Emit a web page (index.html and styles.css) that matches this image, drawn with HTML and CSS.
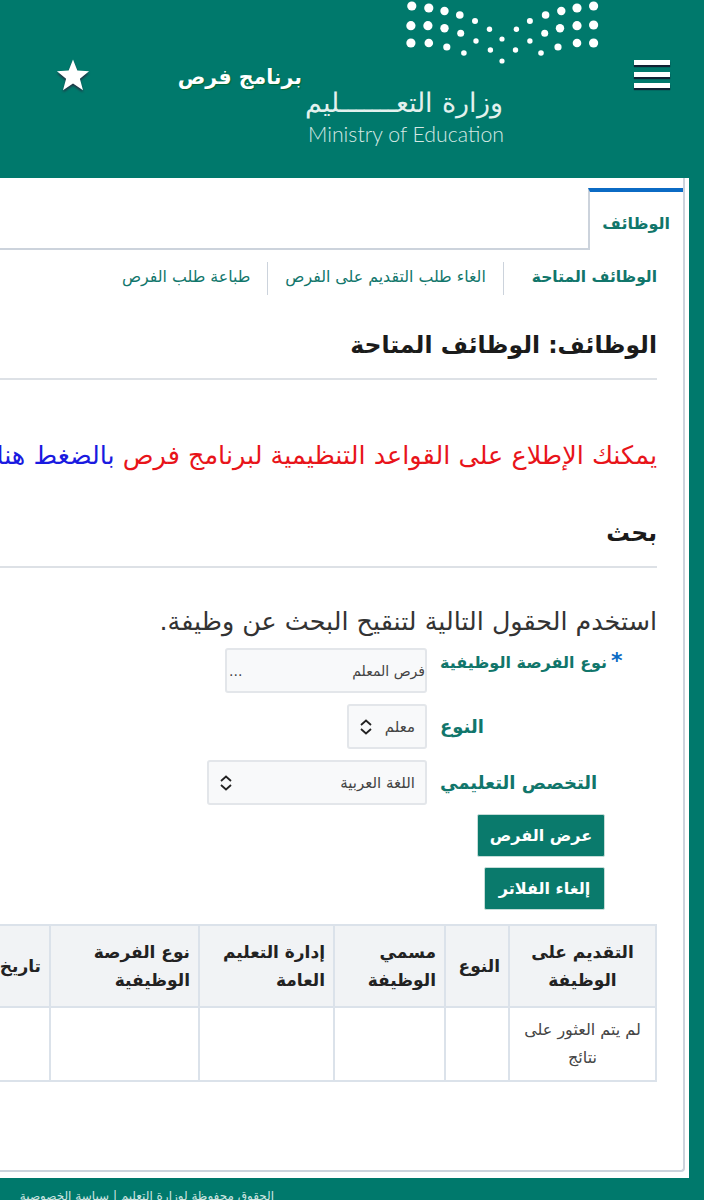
FILE: index.html
```html
<!DOCTYPE html>
<html lang="ar" dir="rtl">
<head>
<meta charset="utf-8">
<title>برنامج فرص</title>
<link rel="stylesheet" href="styles.css">
</head>
<body>
<header class="top">
  <button class="burger" aria-label="menu"><span></span><span></span><span></span></button>
  <div class="logo">
    <svg class="dots" width="195" height="66" viewBox="0 0 195 66" fill="#fff">
      <circle cx="6.8" cy="6" r="4.6"/><circle cx="23.8" cy="8" r="4.6"/><circle cx="39.5" cy="11" r="4.2"/><circle cx="54.8" cy="15" r="3.8"/><circle cx="70" cy="21" r="3"/>
      <circle cx="124.9" cy="21" r="3"/><circle cx="140.6" cy="15" r="3.8"/><circle cx="156.3" cy="11" r="4.2"/><circle cx="172" cy="8" r="4.6"/><circle cx="188.6" cy="6" r="4.6"/>
      <circle cx="5.9" cy="25.7" r="4.6"/><circle cx="22.9" cy="25.7" r="4.6"/><circle cx="39.5" cy="28.3" r="4.2"/><circle cx="55.7" cy="33.3" r="3.5"/><circle cx="84.5" cy="29.3" r="2.7"/>
      <circle cx="111.4" cy="29.3" r="2.7"/><circle cx="139.7" cy="33.3" r="3.5"/><circle cx="155" cy="28.3" r="4.2"/><circle cx="172" cy="25.7" r="4.6"/><circle cx="188.6" cy="25" r="4.6"/>
      <circle cx="5.9" cy="43" r="4.6"/><circle cx="23.8" cy="43" r="4.3"/><circle cx="41.8" cy="47" r="3.6"/><circle cx="58.9" cy="53" r="2.8"/><circle cx="71" cy="41" r="2.7"/><circle cx="85.4" cy="50" r="2.7"/><circle cx="97" cy="39" r="2.6"/><circle cx="97" cy="61" r="2.6"/>
      <circle cx="110.5" cy="50" r="2.7"/><circle cx="124.9" cy="41" r="2.7"/><circle cx="136" cy="53" r="2.8"/><circle cx="153" cy="47" r="3.6"/><circle cx="172" cy="43" r="4.3"/><circle cx="188.6" cy="43" r="4.6"/>
    </svg>
    <div class="logo-ar">وزارة التعـــــــليم</div>
    <div class="logo-en" dir="ltr">Ministry of Education</div>
  </div>
  <div class="prog">برنامج فرص</div>
  <svg class="star" width="34" height="35" viewBox="0 0 36 36"><path d="M18 1l4.600 11.800 12.400.7-9.700 7.900 3.300 12.300L18 26.600 7.400 33.700l3.300-12.300L1 13.500l12.400-.7z" fill="#fff"/></svg>
</header>

<main class="card">
  <div class="panel">
    <div class="tabs"><div class="tab">الوظائف</div></div>
    <nav class="subnav">
      <a class="sub active">الوظائف المتاحة</a>
      <a class="sub">الغاء طلب التقديم على الفرص</a>
      <a class="sub">طباعة طلب الفرص</a>
    </nav>
    <section class="content">
      <h2 class="title">الوظائف: الوظائف المتاحة</h2>
      <p class="notice">يمكنك الإطلاع على القواعد التنظيمية لبرنامج فرص <span class="blue">بالضغط هنا</span></p>
      <h2 class="title second">بحث</h2>
      <p class="hint">استخدم الحقول التالية لتنقيح البحث عن وظيفة.</p>

      <div class="field f1">
        <label class="lbl"><span class="req">*</span>نوع الفرصة الوظيفية</label>
        <div class="control w202"><span>فرص المعلم</span><span class="more">...</span></div>
      </div>
      <div class="field f2">
        <label class="lbl">النوع</label>
        <div class="control w80 sel"><span>معلم</span>
          <svg class="updown" width="14" height="16" viewBox="0 0 14 16"><path d="M2 6l5-4.500 5 4.500M2 10l5 4.500 5-4.500" fill="none" stroke="#222" stroke-width="1.800"/></svg>
        </div>
      </div>
      <div class="field f3">
        <label class="lbl">التخصص التعليمي</label>
        <div class="control w220 sel"><span>اللغة العربية</span>
          <svg class="updown" width="14" height="16" viewBox="0 0 14 16"><path d="M2 6l5-4.500 5 4.500M2 10l5 4.500 5-4.500" fill="none" stroke="#222" stroke-width="1.800"/></svg>
        </div>
      </div>
      <div class="actions">
        <button class="btn b1">عرض الفرص</button>
        <button class="btn b2">إلغاء الفلاتر</button>
      </div>

      <table class="grid">
        <colgroup>
          <col class="c1"><col class="c2"><col class="c3"><col class="c4"><col class="c5"><col class="c6">
        </colgroup>
        <thead>
          <tr>
            <th>التقديم على الوظيفة</th>
            <th>النوع</th>
            <th>مسمي الوظيفة</th>
            <th>إدارة التعليم العامة</th>
            <th>نوع الفرصة الوظيفية</th>
            <th>تاريخ الاعلان</th>
          </tr>
        </thead>
        <tbody>
          <tr>
            <td class="empty">لم يتم العثور على نتائج</td>
            <td></td><td></td><td></td><td></td><td></td>
          </tr>
        </tbody>
      </table>
    </section>
  </div>
</main>
<footer class="foot">الحقوق محفوظة لوزارة التعليم | سياسة الخصوصية</footer>
</body>
</html>
```

FILE: styles.css
```css
html, body { margin: 0; padding: 0; overflow-x: hidden; }
body {
  background: #00796c;
  font-family: "DejaVu Sans", "Noto Sans", sans-serif;
  color: #333;
  width: 704px;
  height: 1200px;
  overflow: hidden;
}
.top {
  height: 178px;
  display: flex;
  align-items: flex-start;
  color: #fff;
}
.burger {
  width: 36px;
  height: 28px;
  margin: 60px 34px 0 0;
  padding: 0;
  border: 0;
  background: none;
  display: flex;
  flex-direction: column;
  justify-content: space-between;
}
.burger span {
  display: block;
  width: 36px;
  height: 5px;
  background: #fff;
  box-shadow: 0 2px 1px #123;
}
.logo {
  width: 292px;
  margin-right: 34px;
  display: flex;
  flex-direction: column;
  align-items: flex-start;
}
.dots { display: block; }
.logo-ar {
  align-self: flex-end;
  width: 195px;
  margin-top: 19px;
  font-size: 27px;
  line-height: 36px;
  font-weight: 200;
  white-space: nowrap;
  color: #e3f1ee;
  text-align: right;
}
.logo-en {
  align-self: flex-end;
  width: 195px;
  margin-top: 1px;
  font-family: "Lato", sans-serif;
  font-size: 21.3px;
  line-height: 24px;
  font-weight: 300;
  color: #d5e8e4;
  white-space: nowrap;
  text-align: left;
}
.prog {
  margin: 64px 6px 0 0;
  width: 124px;
  font-size: 20.5px;
  line-height: 26px;
  font-weight: 700;
  white-space: nowrap;
  text-shadow: 1px 1px 1px #063;
}
.star {
  margin: 58px 88px 0 0;
  filter: drop-shadow(0 2px 1px #234);
}
.card {
  width: 1200px;
  height: 1000px;
  margin-right: 15px;
  box-sizing: border-box;
  background: #fff;
  padding: 0 4px 6px 0;
}
.panel {
  height: 994px;
  box-sizing: border-box;
  border-right: 2px solid #ccd3dc;
  border-bottom: 2px solid #ccd3dc;
  border-bottom-right-radius: 4px;
  padding-top: 10px;
}
.tabs {
  border-bottom: 2px solid #ccd3dc;
  height: 60px;
}
.tab {
  width: 95px;
  height: 62px;
  box-sizing: border-box;
  border-top: 4px solid #0b6bc4;
  border-left: 2px solid #ccd3dc;
  background: #fff;
  color: #11766b;
  font-size: 16px;
  font-weight: 700;
  line-height: 64px;
  padding-right: 13px;
  white-space: nowrap;
}
.subnav {
  display: flex;
  margin: 12px 26px 0 0;
}
.sub {
  height: 33px;
  line-height: 30px;
  font-size: 15.8px;
  color: #11766b;
  padding: 0 17px;
  border-left: 1px solid #ccd3dc;
  white-space: nowrap;
}
.sub:first-child { padding: 0 0 0 28px; }
.sub:last-child { border-left: 0; }
.sub.active { font-weight: 700; font-size: 15.5px; }
.content { padding: 0 26px 0 0; }
.title {
  margin: 0;
  font-size: 23.5px;
  line-height: 36px;
  font-weight: 700;
  color: #1b1b1b;
  padding-bottom: 15px;
  border-bottom: 2px solid #dde1e6;
  white-space: nowrap;
}
.content > .title:first-child { margin-top: 32px; }
.notice {
  margin: 57px 0 0;
  font-size: 25.5px;
  line-height: 36px;
  color: #e8141a;
  white-space: nowrap;
}
.blue { color: #1a1ae0; }
.second { margin-top: 42px; }
.hint {
  margin: 35px 0 0;
  font-size: 25.4px;
  line-height: 36px;
  color: #333;
  white-space: nowrap;
}
.field { display: flex; align-items: center; }
.f1 { margin-top: 9px; height: 46px; align-items: flex-start; }
.f2 { margin-top: 10px; }
.f3 { margin-top: 11px; }
.lbl {
  width: 230px;
  box-sizing: border-box;
  font-size: 16px;
  font-weight: 700;
  color: #11766b;
  white-space: nowrap;
  text-align: left;
  padding-left: 13px;
}
.f2 .lbl, .f3 .lbl { font-size: 18px; }
.f1 .lbl { line-height: 30px; }
.req {
  color: #0b6bc4;
  font-size: 22px;
  line-height: 14px;
  margin-left: 4px;
}
.control {
  height: 45px;
  box-sizing: border-box;
  border: 2px solid #e3e6ea;
  border-radius: 3px;
  background: #f8f9fa;
  display: flex;
  align-items: center;
  justify-content: space-between;
  font-size: 14px;
  color: #444;
  white-space: nowrap;
}
.w202 { width: 202px; }
.w80 { width: 80px; }
.w220 { width: 220px; }
.sel { padding: 0 10px; font-size: 15px; }
.updown { flex: none; }
.more { margin-left: 2px; }
.actions {
  display: flex;
  flex-direction: column;
  align-items: flex-start;
  gap: 10px;
  margin: 9px 52px 0 0;
}
.btn {
  height: 43px;
  border: 1px solid #c5dcd8;
  border-radius: 2px;
  background: #0a7a6c;
  color: #fff;
  font-family: inherit;
  font-size: 16px;
  font-weight: 700;
  padding: 0;
  white-space: nowrap;
}
.b1 { width: 128px; }
.b2 { width: 121px; }
.grid {
  margin-top: 14px;
  border-collapse: collapse;
  table-layout: fixed;
  width: 800px;
  color: #222;
}
.c1 { width: 147px; }
.c2 { width: 64px; }
.c3 { width: 111px; }
.c4 { width: 135px; }
.c5 { width: 149px; }
.c6 { width: 194px; }
.grid th, .grid td {
  border: 2px solid #dbe2ea;
  padding: 0 12px;
  text-align: center;
}
.grid th {
  height: 80px;
  background: #f1f3f5;
  font-size: 17px;
  line-height: 28px;
  font-weight: 700;
  text-align: right;
  padding: 0 8px;
}
.grid th:first-child { text-align: center; padding: 0 12px; }
.grid td { height: 72px; font-size: 16px; line-height: 28px; color: #444; }
.foot {
  margin: 9px 430px 0 0;
  color: #cfe5e1;
  font-size: 12px;
  line-height: 18px;
  white-space: nowrap;
}
```
